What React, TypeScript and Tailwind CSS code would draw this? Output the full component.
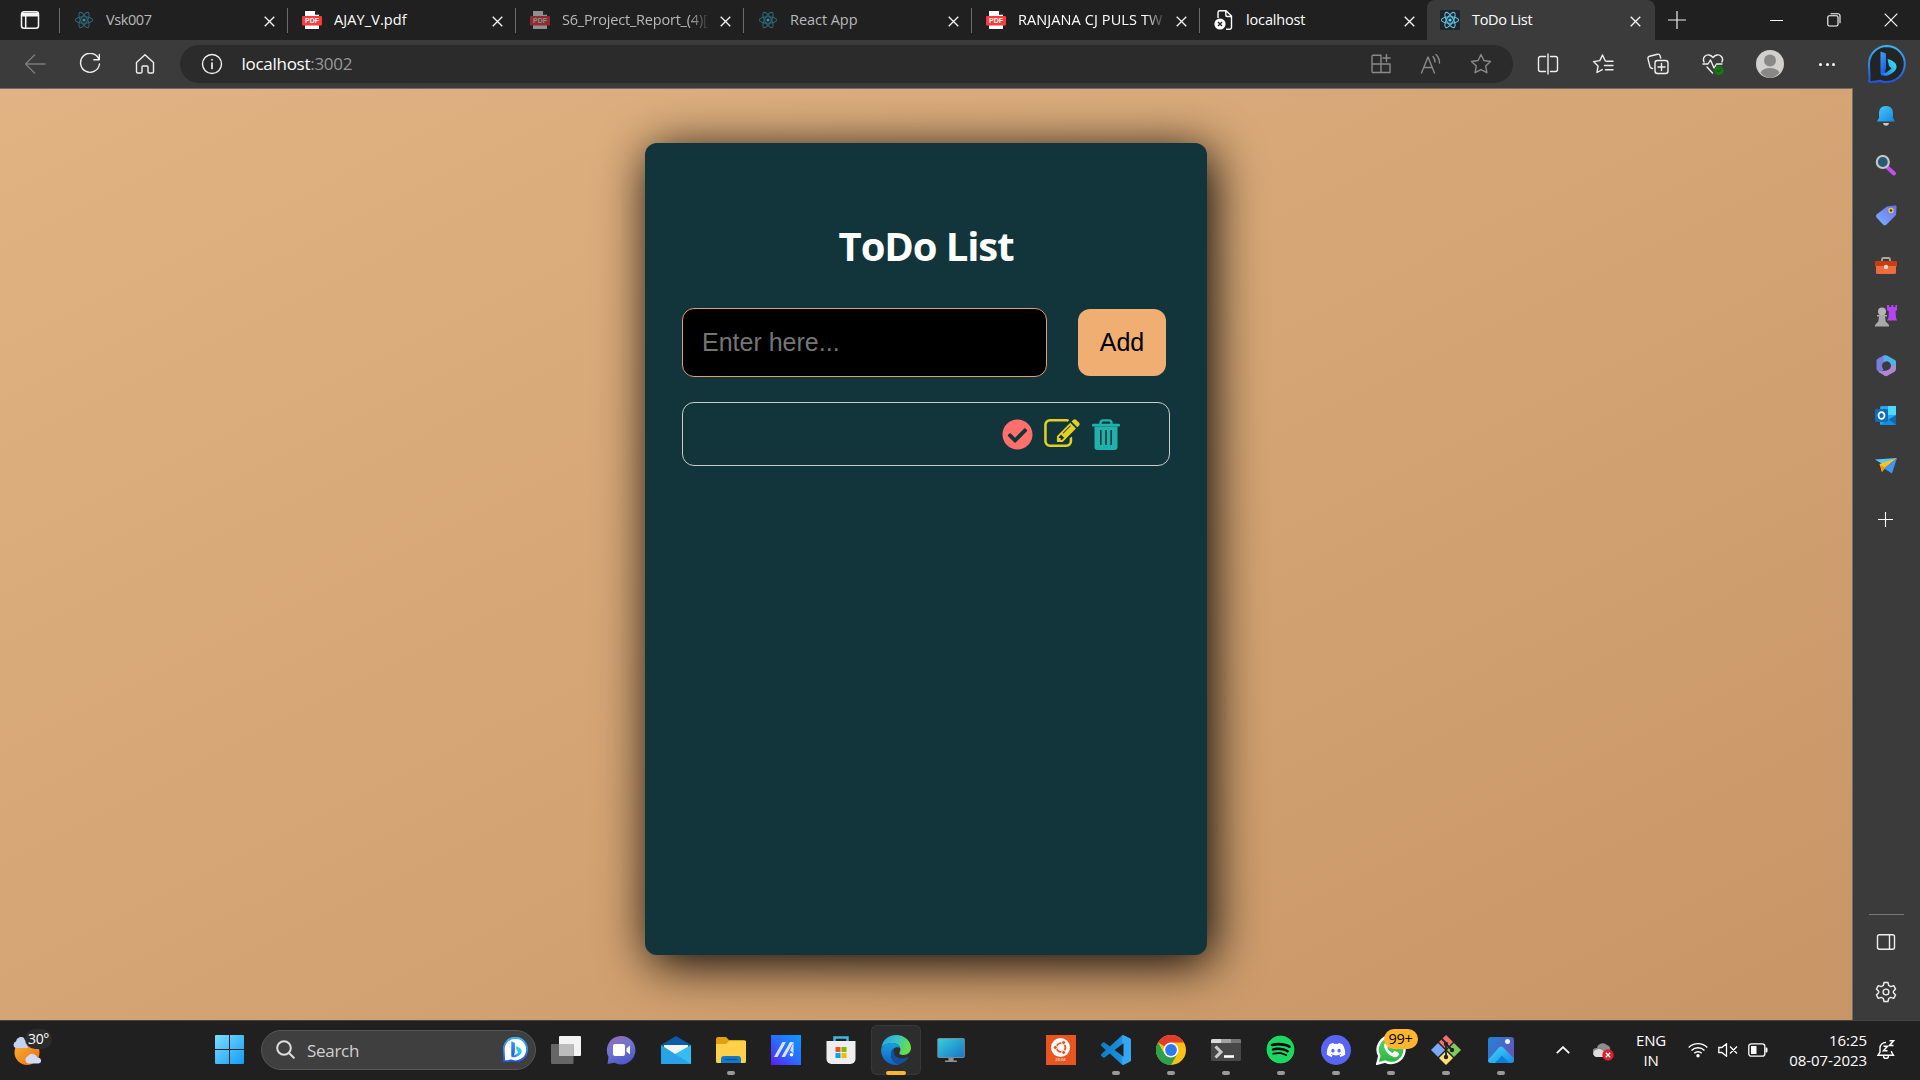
import React from "react";
import { FaCheckCircle, FaDiscord, FaSpotify } from "react-icons/fa";

type IconProps = { className?: string };

const Atom = ({ dim, boxed }: { dim?: boolean; boxed?: boolean }) => (
  <svg viewBox="0 0 20 20" className="size-5 shrink-0" fill="none" stroke={dim ? "#2d6675" : "#5cc3e2"} strokeWidth="1.1">
    {boxed && <rect width="20" height="20" rx="1.5" fill="#20232a" stroke="none" />}
    <ellipse cx="10" cy="10" rx="8.6" ry="3.3" />
    <ellipse cx="10" cy="10" rx="8.6" ry="3.3" transform="rotate(60 10 10)" />
    <ellipse cx="10" cy="10" rx="8.6" ry="3.3" transform="rotate(120 10 10)" />
    <circle cx="10" cy="10" r="1.6" fill={dim ? "#3b8ea3" : "#61dafb"} stroke="none" />
  </svg>
);

const Pdf = ({ dim }: { dim?: boolean }) => (
  <svg viewBox="0 0 20 20" className={dim ? "size-5 shrink-0 opacity-50" : "size-5 shrink-0"}>
    <path d="M2.5 .5h11l4 4v15h-15z" fill="#fff" stroke="#000" strokeWidth=".8" />
    <path d="M13 .5v4.2h4.5z" fill="#222" />
    <rect x="0" y="6" width="20" height="9.5" rx="1" fill="#fb3b3b" />
    <text x="10" y="13.3" fontSize="7" fontWeight="700" textAnchor="middle" fill="#fff" fontFamily="Liberation Sans, sans-serif">PDF</text>
  </svg>
);

const PageError = () => (
  <svg viewBox="0 0 20 20" className="size-5 shrink-0" fill="none" stroke="#fff" strokeWidth="1.4">
    <path d="M4 8V2.5A1.8 1.8 0 0 1 5.8 .8H12L17.5 6V17.5a1.7 1.7 0 0 1-1.7 1.7H12M11.8 1v4a1.5 1.5 0 0 0 1.5 1.5h4" />
    <circle cx="6" cy="14" r="5.6" fill="#fff" stroke="none" />
    <path d="m4 12 4 4M8 12l-4 4" stroke="#222" strokeWidth="1.4" />
  </svg>
);

const Cross = ({ className = "size-[11px]" }: IconProps) => (
  <svg viewBox="0 0 12 12" className={className} fill="none" stroke="#f2f2f2" strokeWidth="1.5">
    <path d="m.8.8 10.4 10.4M11.2.8.8 11.2" />
  </svg>
);

type TabInfo = { title: string; icon: React.ReactNode; dim?: boolean; fade?: boolean; track: string };
const tabs: TabInfo[] = [
  { title: "Vsk007", icon: <Atom dim />, dim: true, track: "tracking-[-0.4px]" },
  { title: "AJAY_V.pdf", icon: <Pdf />, track: "tracking-[0.1px]" },
  { title: "S6_Project_Report_(4)[", icon: <Pdf dim />, dim: true, fade: true, track: "tracking-[-0.2px]" },
  { title: "React App", icon: <Atom dim />, dim: true, track: "tracking-[-0.05px]" },
  { title: "RANJANA CJ PULS TW", icon: <Pdf />, fade: true, track: "tracking-[0.1px]" },
  { title: "localhost", icon: <PageError />, track: "tracking-[-0.15px]" },
];

function TabStrip() {
  return (
    <header className="flex h-10 shrink-0 bg-[#202020]">
      <div className="flex w-[59px] items-center justify-center">
        <svg viewBox="0 0 20 20" className="size-5" fill="none" stroke="#f4f4f4" strokeWidth="1.5">
          <rect x="1.5" y="1.8" width="17" height="16.4" rx="2.5" />
          <path d="M2 3.5h16v2.3H2z" fill="#f4f4f4" />
          <path d="M5.7 6v12" />
        </svg>
      </div>
      {tabs.map((t) => (
        <div key={t.title} className="flex w-[228px] items-center">
          <i className="h-[25px] w-px shrink-0 bg-[#6b6b6b]" />
          <div className="ml-3.5 flex">{t.icon}</div>
          <div
            className={`ml-3 w-[148px] shrink-0 overflow-hidden text-[14.5px] leading-5 whitespace-nowrap ${t.track} ${t.dim ? "text-[#b9b9b9]" : "text-white"} ${t.fade ? "[mask-image:linear-gradient(to_right,#000_86%,transparent)]" : ""}`}
          >
            {t.title}
          </div>
          <div className="ml-[9.5px] flex pt-0.5"><Cross /></div>
        </div>
      ))}
      <div className="flex w-[228px] items-center rounded-t-lg bg-[#3b3b3b] pl-[13px]">
        <Atom boxed />
        <div className="ml-3 w-[146px] text-[14.5px] leading-5 tracking-[-0.3px] text-white">ToDo List</div>
        <div className="ml-3 flex pt-0.5"><Cross /></div>
      </div>
      <div className="flex w-11 items-center justify-center">
        <svg viewBox="0 0 18 18" className="size-[18px]" stroke="#eee" strokeWidth="1.2"><path d="M9 0v18M0 9h18" /></svg>
      </div>
      <div className="ml-auto flex items-center">
        <div className="flex w-[57px] justify-center"><i className="h-px w-[13px] bg-white" /></div>
        <div className="flex w-[57px] justify-center">
          <svg viewBox="0 0 14 14" className="size-3.5" fill="none" stroke="#fff" strokeWidth="1.1">
            <rect x=".8" y="2.8" width="10.2" height="10.2" rx="1.5" />
            <path d="M3.5.8h7.5a2 2 0 0 1 2 2v7.5" />
          </svg>
        </div>
        <div className="flex w-[58px] justify-center">
          <svg viewBox="0 0 14 14" className="size-3.5" stroke="#fff" strokeWidth="1.1"><path d="m.7.7 12.6 12.6M13.3.7.7 13.3" /></svg>
        </div>
      </div>
    </header>
  );
}

const Line = ({ children, color = "#efefef", size = "size-[22px]" }: { children: React.ReactNode; color?: string; size?: string }) => (
  <svg viewBox="0 0 22 22" className={size} fill="none" stroke={color} strokeWidth="1.4" strokeLinecap="round" strokeLinejoin="round">
    {children}
  </svg>
);

const BingBubble = ({ className, light }: { className: string; light?: boolean }) => (
  <svg viewBox="0 0 38 38" className={className}>
    <defs>
      <linearGradient id="bingRing" x1="0" y1="0" x2="0" y2="1"><stop offset="0" stopColor="#3ab4f2" /><stop offset="1" stopColor="#1f55e0" /></linearGradient>
      <linearGradient id="bingB" x1="0" y1="0" x2=".3" y2="1"><stop offset="0" stopColor="#3ea2f7" /><stop offset="1" stopColor="#1c5be8" /></linearGradient>
      <linearGradient id="bingC" x1="0" y1="1" x2="1" y2="0"><stop offset="0" stopColor="#2a6ff0" /><stop offset=".6" stopColor="#27c3f0" /><stop offset="1" stopColor="#4be3d8" /></linearGradient>
    </defs>
    <path d="M19 1a18 18 0 1 1-7 34.7C8 37 4 37 1.2 36.8 2.2 33 1 28 1 19A18 18 0 0 1 19 1z" fill={light ? "#fff" : "#242424"} stroke="url(#bingRing)" strokeWidth={light ? 3 : 2} />
    <path d="M12.500 6.500 18 8.600v14l-1.500 7.500-3 .5c-.7-.8-1-2-1-3.600z" fill="url(#bingB)" />
    <path d="M19.500 14c5.500 1.500 9.500 4 9 8.500-.4 4-6.500 7.500-10.500 8.300-2.500.3-4-.8-4.300-2.800 2 .6 3.600.1 5.300-1l4.500-3.500-2.500-2.500z" fill="url(#bingC)" />
  </svg>
);

function Toolbar() {
  return (
    <nav className="flex h-12 shrink-0 items-center bg-[#3b3b3b] pl-[7px]">
      <div className="flex w-[55px] justify-center"><Line color="#7c7c7c"><path d="M21 11H1.500M10.500 2 1.500 11l9 9" /></Line></div>
      <div className="flex w-[55px] justify-center"><Line><path d="M20 6.500A9.500 9.500 0 1 0 20.500 11M20.300 1.500v5.200h-5.500" /></Line></div>
      <div className="flex w-[55px] justify-center"><Line><path d="M2.500 9.500 11 1.700l8.500 7.800v9.200a1.300 1.300 0 0 1-1.300 1.300h-3a1.200 1.200 0 0 1-1.200-1.200V14a1 1 0 0 0-1-1H9a1 1 0 0 0-1 1v4.800A1.200 1.200 0 0 1 6.800 20h-3a1.300 1.300 0 0 1-1.300-1.300z" /></Line></div>
      <div className="ml-2 flex h-[38px] w-[1333px] items-center rounded-full bg-[#2b2b2b] pr-[7px] pl-[21px]">
        <Line><circle cx="11" cy="11" r="9.500" /><path d="M11 10v5.500M11 6.600v.2" strokeWidth="1.700" /></Line>
        <div className="mb-px ml-[18.5px] text-[17px] leading-6 tracking-[-0.28px] text-white">localhost<span className="text-[#979797]">:3002</span></div>
        <div className="ml-auto flex w-[50px] justify-center"><Line color="#8a8a8a"><path d="M2 11h18v8.500H3.200A1.200 1.200 0 0 1 2 18.300V3.500A1.200 1.200 0 0 1 3.200 2.300H11v17M16.500 1.500v7M13 5h7" /></Line></div>
        <div className="flex w-[50px] justify-center"><Line color="#8a8a8a"><path d="m1.500 20 6.500-16 6.500 16M3.800 14.500h8.400M13 3.500c1.300 1.500 2 3.500 2 5.500M16 1.500c2.300 2.300 3.500 5 3.500 8.500" /></Line></div>
        <div className="flex w-[50px] justify-center"><Line color="#8a8a8a"><path d="m11 1.500 2.900 6 6.600 1-4.800 4.600 1.200 6.600L11 16.600l-5.900 3.100 1.200-6.600L1.500 8.500l6.600-1z" /></Line></div>
      </div>
      <div className="ml-[7px] flex items-center">
        <div className="flex w-[55px] justify-center"><Line><path d="M8.500 3.500h-5a2 2 0 0 0-2 2v11a2 2 0 0 0 2 2h5M13.500 3.500h5a2 2 0 0 1 2 2v11a2 2 0 0 1-2 2h-5M11 1v20" /></Line></div>
        <div className="flex w-[55px] justify-center"><Line><path d="M13.300 8 10.500 2 7.800 7.600l-6.300 1 4.500 4.500-1 6.400 5.300-2.800M14.500 8.300H21M12.500 12.500H21M13.500 16.700H21" /></Line></div>
        <div className="flex w-[55px] justify-center"><Line><rect x="8" y="7.500" width="13" height="13" rx="2.500" /><path d="M14.500 10.500v7M11 14h7M5.500 15.500l-1-.3a2 2 0 0 1-1.600-1.800L1 5.800a2 2 0 0 1 1.500-2.500l8-2A2 2 0 0 1 13 2.500l.7 2.500" /></Line></div>
        <div className="flex w-[55px] justify-center">
          <Line><path d="M2 9C0 4 4 1.500 7 2c2 .3 3 1.300 4 2.500C12 3.300 13 2.300 15 2c3-.5 7 2 5 7M1 11h5l2.500-4 3.500 8 2.500-4h5.500M5 14l5.500 6" /><circle cx="17" cy="17.500" r="4.600" fill="#107c10" stroke="none" /><path d="m15 17.500 1.500 1.500 2.700-2.800" stroke="#0b4a0b" strokeWidth="1" /></Line>
        </div>
        <div className="flex w-[59px] justify-center">
          <svg viewBox="0 0 28 28" className="size-7"><circle cx="14" cy="14" r="14" fill="#d2d0ce" /><circle cx="14" cy="10.500" r="6" fill="#8a8886" /><path d="M4.500 22.500C6 19.500 9.500 18 14 18s8 1.500 9.500 4.500A14 14 0 0 1 14 28a14 14 0 0 1-9.500-5.500z" fill="#8a8886" /></svg>
        </div>
        <div className="flex w-[56px] justify-center gap-[3.5px]"><i className="size-[3px] rounded-full bg-white" /><i className="size-[3px] rounded-full bg-white" /><i className="size-[3px] rounded-full bg-white" /></div>
      </div>
      <div className="flex flex-1 justify-center pr-0.5"><BingBubble className="size-[38px]" /></div>
    </nav>
  );
}

const EditIcon = ({ className }: IconProps) => (
  <svg viewBox="0 128 1792 1408" className={className} fill="currentColor">
    <path d="M888 1184l116-116-152-152-116 116v56h96v96h56zm440-720q-16-16-33 1l-350 350q-17 17-1 33t33-1l350-350q17-17 1-33zm80 594v190q0 119-84.500 203.500t-203.500 84.500h-832q-119 0-203.500-84.500t-84.500-203.500v-832q0-119 84.500-203.500t203.500-84.500h832q63 0 117 25 15 7 18 23 3 17-9 29l-49 49q-14 14-32 8-23-6-45-6h-832q-66 0-113 47t-47 113v832q0 66 47 113t113 47h832q66 0 113-47t47-113v-126q0-13 9-22l64-64q15-15 35-7t20 29zm-96-738l288 288-672 672h-288v-288zm444 132l-92 92-288-288 92-92q28-28 68-28t68 28l152 152q28 28 28 68t-28 68z" />
  </svg>
);

const TrashIcon = ({ className }: IconProps) => (
  <svg viewBox="0 0 28 31" className={className} fill="none">
    <path d="M8.500 6V4A2.500 2.500 0 0 1 11 1.400h6A2.500 2.500 0 0 1 19.500 4v2" stroke="currentColor" strokeWidth="2.400" />
    <rect y="4.800" width="28" height="2.800" rx="1.200" fill="currentColor" />
    <path fillRule="evenodd" fill="currentColor" d="M2.500 7.500h23V28a3 3 0 0 1-3 3h-17a3 3 0 0 1-3-3zM8 11v15h1.600V11zm5.200 0v15h1.600V11zm5.200 0v15H20V11z" />
  </svg>
);

function TodoPage() {
  return (
    <main className="flex flex-1 items-start justify-center border-t border-r border-[#6e6e6e] bg-[linear-gradient(to_bottom_right,#e1b382,#c89666)] pt-[54px]">
      <section className="h-[812px] w-[562px] rounded-xl bg-[#12343b] px-[37px] pt-[76px] shadow-[5px_8px_50px_#000]">
        <h1 className="text-center text-[40px] leading-[53px] font-bold tracking-[-1.1px] text-white">ToDo List</h1>
        <form className="mt-9 flex items-center">
          <input
            placeholder="Enter here..."
            className="h-[69px] w-[365px] rounded-xl border border-[#e1a16a] bg-black px-[19px] font-['Liberation_Sans',sans-serif] text-[25px] text-white placeholder:text-[#757575]"
          />
          <button type="button" className="ml-[31px] h-[67px] w-[88px] rounded-xl bg-[#f0ae73] font-['Liberation_Sans',sans-serif] text-[25px] text-black">Add</button>
        </form>
        <div className="mt-[25px] flex h-16 items-start rounded-xl border border-[#ccc] pt-4 pl-[318.5px]">
          <FaCheckCircle className="size-[31px] text-[#ff6f6c]" />
          <EditIcon className="ml-[11px] h-7 w-9 text-[#e3d026]" />
          <TrashIcon className="ml-3 h-[31px] w-7 text-[#20b2aa]" />
        </div>
      </section>
    </main>
  );
}

const sideIcons: React.ReactNode[] = [
  <><path d="M11 1C6 1 4 4.500 4 8.500V13l-2 3.500h18L18 13V8.500C18 4.500 16 1 11 1z" fill="url(#bell)" /><path d="M8 18h6c-.3 1.800-1.400 2.800-3 2.800S8.300 19.800 8 18z" fill="#c9c9c9" /></>,
  <><path d="m13 13 6 5.500" stroke="#c64bf0" strokeWidth="4" strokeLinecap="round" /><circle cx="7.800" cy="7" r="6" fill="#245a75" stroke="#c6c6c6" strokeWidth="2.200" /></>,
  <><path d="M12 1.500 19.500 .5A1.500 1.500 0 0 1 21.500 2.500L21 10 11.500 19.500a2.500 2.500 0 0 1-3.500 0L1.500 12.500a2.500 2.500 0 0 1 0-3z" fill="url(#tag)" /><circle cx="16" cy="5.500" r="2" fill="#333" stroke="#f7cf2e" strokeWidth="1.300" /></>,
  <><path d="M7 6V4.500A1.500 1.500 0 0 1 8.500 3h5A1.500 1.500 0 0 1 15 4.500V6" fill="none" stroke="#aaa" strokeWidth="1.800" /><rect x="0" y="6" width="22" height="6" rx="1" fill="#c63d12" /><path d="M1 11h20v6.500a1.500 1.500 0 0 1-1.500 1.500h-17A1.500 1.500 0 0 1 1 17.500z" fill="#ef6a3c" /><circle cx="11" cy="12" r="2.200" fill="#d8d8d8" /></>,
  <><path d="M12 0h2.300v2h2V0h2v2h2V0H22v5l-1.500 1.500.5 6 1 3H12l1.500-3 .3-6L12 5z" fill="#b545ef" /><circle cx="7" cy="6.500" r="4" fill="#b4b4b4" /><path d="M2 10h10v1.500H10l.7 5 3.300 3.500v1.500H0v-1.500L3.300 16.500 4 11.500H2z" fill="#a9a9a9" /></>,
  <><path d="M9 .3 3 3.500a3 3 0 0 0-1.500 2.600v8.500L5 18l3.500-3.500a6 6 0 0 1-1-6L11.500 5z" fill="#7a7de0" /><path d="m8.500 .5 3-.2 8 4.500A2.500 2.500 0 0 1 21 7v5l-5-1.500a5 5 0 0 0-4-4.300L8.500 7z" fill="#4fb2e6" /><path d="m3 16.500 6.500 4.200a3 3 0 0 0 3 0l7-4a3 3 0 0 0 1.500-2.600V11l-5-1c.3 3-2 5-4.500 5.500z" fill="#ae86d6" /></>,
  <><rect x="5" y="1" width="16" height="19" rx="1.500" fill="#28a8ea" /><path d="M13 1h8v9h-8z" fill="#50d9ff" /><path d="m21 10-8 5 8 5z" fill="#1565b0" /><path d="M5 20h16l-8-6z" fill="#1490df" /><rect x="0" y="4" width="13" height="13" rx="1.300" fill="#0f6cbd" /><ellipse cx="6.500" cy="10.500" rx="3" ry="3.400" fill="none" stroke="#fff" strokeWidth="1.800" /></>,
  <><path d="M0 4.500 22 3 9 10z" fill="#58c6ff" /><path d="m4.500 9 17.500-6L10 13l-3 4z" fill="#ffc21a" /><path d="M22 3 17 18.500 9 13.500z" fill="#3c97f5" /><path d="M5.500 10 7 17l3-4z" fill="#e89a0c" /></>,
];

function Sidebar() {
  return (
    <aside className="flex w-[67px] flex-col items-center bg-[#3b3b3b] pt-[3px] pr-0.5 pb-[3px]">
      {sideIcons.map((art, i) => (
        <div key={i} className="flex h-[50px] items-center">
          <svg viewBox="0 0 22 22" className="size-[22px]" fill="none">
            <defs>
              <linearGradient id="bell" x1="0" y1="0" x2="1" y2="1"><stop offset="0" stopColor="#45cdf7" /><stop offset="1" stopColor="#1584e0" /></linearGradient>
              <linearGradient id="tag" x1="1" y1="0" x2="0" y2="1"><stop offset="0" stopColor="#6b6cf0" /><stop offset="1" stopColor="#7db2ff" /></linearGradient>
            </defs>
            {art}
          </svg>
        </div>
      ))}
      <div className="flex h-14 items-center"><svg viewBox="0 0 15 15" className="size-[15px]" stroke="#fff" strokeWidth="1.1"><path d="M7.500 0v15M0 7.500h15" /></svg></div>
      <i className="mt-auto mb-0.5 ml-0.5 h-px w-[35px] bg-[#777]" />
      <div className="flex h-[50px] items-center"><Line><rect x="2.500" y="3.800" width="17" height="14.400" rx="2" /><path d="M14.500 4v14" /></Line></div>
      <div className="flex h-[50px] items-center">
        <Line>
          <path d="M9 1.500h4l.7 3 2 1.100 3-.9 1.900 3.400-2.200 2.100v1.600l2.200 2.100-1.900 3.400-3-.9-2 1.100-.7 3H9l-.7-3-2-1.100-3 .9-1.900-3.400 2.200-2.100v-1.600L1.400 8.100l1.900-3.400 3 .9 2-1.100z" />
          <circle cx="11" cy="11" r="2.900" />
        </Line>
      </div>
    </aside>
  );
}

const Art = ({ children }: { children: React.ReactNode }) => (
  <svg viewBox="0 0 30 30" className="size-[30px]" fill="none">{children}</svg>
);

type AppEntry = { name: string; art: React.ReactNode; state?: "open" | "active"; badge?: string };

const leftApps: AppEntry[] = [
  { name: "taskview", art: <Art><rect x="8" y="1" width="22" height="20" rx="1" fill="#f3f3f3" /><rect x="0" y="9" width="22.500" height="20" rx="1" fill="#666" /><path d="M8 9h14.500v12H8z" fill="#bcbcbc" /></Art> },
  { name: "chat", art: <Art><defs><linearGradient id="chat" x1=".1" y1="0" x2=".5" y2="1"><stop offset="0" stopColor="#9a6bb0" /><stop offset=".5" stopColor="#6e74cf" /><stop offset="1" stopColor="#5059c9" /></linearGradient></defs><path d="M15 1a14.200 14.200 0 1 1-6.500 26.700L1.500 29l1-7A14.200 14.200 0 0 1 15 1z" fill="url(#chat)" /><rect x="7" y="9" width="12" height="12" rx="2" fill="#fff" /><path d="m20.500 13.500 3.500-3v9l-3.500-3z" fill="#fff" /></Art> },
  { name: "mail", art: <Art><path d="M0 10 15 1l15 9v4H0z" fill="#0a5ba8" /><path d="M3 10h24v8l-12 6-12-6z" fill="#f4f4f4" /><path d="M30 10v19H0l15-10.500z" fill="#35bdf3" /><path d="M0 10v19h30z" fill="#28a3e8" /></Art> },
  { name: "files", state: "open", art: <Art><path d="M0 4a2 2 0 0 1 2-2h8l3 3h15a2 2 0 0 1 2 2v6H0z" fill="#e0a010" /><path d="M0 9h10l3-3h17v20.500A1.500 1.500 0 0 1 28.500 28H1.500A1.500 1.500 0 0 1 0 26.500z" fill="#ffd04a" /><path d="M5 28v-4a3 3 0 0 1 3-3h14a3 3 0 0 1 3 3v4z" fill="#1379c8" /><path d="M9 24.500h12" stroke="#0b4f8c" strokeWidth="1.300" /></Art> },
  { name: "myasus", art: <Art><defs><linearGradient id="asus" x1="0" y1="1" x2="1" y2="0"><stop offset="0" stopColor="#5a1cf5" /><stop offset=".5" stopColor="#2b6cff" /><stop offset="1" stopColor="#0b9aff" /></linearGradient></defs><rect width="30" height="30" fill="url(#asus)" /><path d="M3 22h3.500L15 7h-3.500zM10.500 22H14l8.500-15H19zM22.500 7v11.500l-3-3-3 6.500" fill="#d8e4ff" /><circle cx="20.500" cy="19.800" r="1.800" fill="#fff" /></Art> },
  { name: "store", art: <Art><path d="M8.500 7V2.500h13V7" stroke="#38b8e8" strokeWidth="2.500" /><path d="M.5 6h29v18a5 5 0 0 1-5 5h-19a5 5 0 0 1-5-5z" fill="#eee" /><path fill="#f25022" d="M9.500 12h5v5h-5z" /><path fill="#7fba00" d="M15.500 12h5v5h-5z" /><path fill="#00a4ef" d="M9.500 18h5v5h-5z" /><path fill="#ffb900" d="M15.500 18h5v5h-5z" /></Art> },
  {
    name: "edge", state: "active", art: (
      <Art>
        <defs>
          <linearGradient id="edgeTop" x1="0" y1="0" x2="1" y2=".3"><stop offset="0" stopColor="#1ba5e0" /><stop offset=".5" stopColor="#35c1cf" /><stop offset="1" stopColor="#66e04a" /></linearGradient>
          <linearGradient id="edgeSide" x1="0" y1="0" x2="0" y2="1"><stop offset="0" stopColor="#1c9de0" /><stop offset="1" stopColor="#0f62c0" /></linearGradient>
        </defs>
        <path d="M.3 13C1.300 5 7.500 0 15 0c9 0 15 6.500 15 13 0 4-3.500 7-7.500 7-3.500 0-4.500-1.200-4-2.500 2.200-3 .5-9-6-9.500C7 8 2.500 9.500.3 13z" fill="url(#edgeTop)" />
        <path d="M.2 13.500C2.500 9.500 7.500 7.800 12.500 8c3.500.2 6 2.500 6.500 5-3-2-9 0-9 7 0 5 4.500 9.500 9 9-1.300.7-2.500 1-4 1C6 30-.8 22.500.2 13.500z" fill="url(#edgeSide)" />
        <path d="M13.500 13c-2.500 1.200-3.600 4-3.500 7 .2 5 4.500 9.200 9 9 3.500-1 6.500-3 8.500-6.200.2-.6-.2-1-.8-.6C19.500 25.500 10.500 22.500 13.500 13z" fill="#11519c" />
      </Art>
    ),
  },
  { name: "pc", art: <Art><defs><linearGradient id="pc" x1="0" y1="0" x2="1" y2="1"><stop offset="0" stopColor="#35d0dc" /><stop offset="1" stopColor="#1874c8" /></linearGradient></defs><rect x="1.800" y="3.500" width="26.500" height="19" rx=".8" fill="url(#pc)" stroke="#7d8b92" strokeWidth="1" /><path d="M12.500 23h5v2.500H21V27H9v-1.500h3.500z" fill="#8b9499" /></Art> },
];

const rightApps: AppEntry[] = [
  {
    name: "ubuntu", art: (
      <div className="flex size-[30px] flex-col items-center bg-[#e95420] pt-[3px]">
        <svg viewBox="0 0 20 20" className="size-[19px] shrink-0" fill="none">
          <circle cx="10" cy="10" r="10" fill="#fff" />
          <circle cx="10.500" cy="10" r="4.600" stroke="#e95420" strokeWidth="2" />
          <g fill="#e95420" stroke="#fff" strokeWidth="1"><circle cx="4.500" cy="10" r="2.100" /><circle cx="13.300" cy="4.800" r="2.100" /><circle cx="13.300" cy="15.200" r="2.100" /></g>
        </svg>
        <span className="text-[4px] leading-[6px] font-bold text-[#ffc9b3]">20.04</span>
      </div>
    ),
  },
  { name: "code", state: "open", art: <svg viewBox="0 0 24 24" className="size-[30px]"><defs><linearGradient id="vs" x1="0" y1="0" x2="1" y2="0"><stop offset="0" stopColor="#0f7cc9" /><stop offset=".7" stopColor="#1c91dd" /><stop offset=".72" stopColor="#32a8f2" /></linearGradient></defs><path fill="url(#vs)" d="M23.150 2.587L18.210.21a1.494 1.494 0 0 0-1.705.29l-9.460 8.630-4.120-3.128a.999.999 0 0 0-1.276.057L.327 7.261A1 1 0 0 0 .326 8.740L3.899 12 .326 15.260a1 1 0 0 0 .001 1.479L1.650 17.940a.999.999 0 0 0 1.276.057l4.120-3.128 9.460 8.630a1.492 1.492 0 0 0 1.704.29l4.942-2.377A1.500 1.500 0 0 0 24 20.060V3.939a1.500 1.500 0 0 0-.85-1.352zm-5.146 14.861L10.826 12l7.178-5.448v10.896z" /></svg> },
  { name: "chrome", state: "open", art: <Art><circle cx="15" cy="15" r="15" fill="#fbc116" /><path d="M15 15 2 7.500A15 15 0 0 1 28 7.500H15z" fill="#e33b2e" /><path d="M2 7.500a15 15 0 0 0 13 22.500l6.500-11.300L15 15 8.500 18.700z" fill="#2ba14b" /><circle cx="15" cy="15" r="7.500" fill="#fff" /><circle cx="15" cy="15" r="5.900" fill="#2f78ee" /></Art> },
  { name: "terminal", state: "open", art: <Art><rect y="4" width="30" height="22" rx="1.500" fill="#484848" /><path d="M0 8V5.500A1.500 1.500 0 0 1 1.500 4H10v4z" fill="#dadada" /><path d="M10 4h10v4H10z" fill="#a3a3a3" /><path d="M20 4h8.500A1.500 1.500 0 0 1 30 5.500V8H20z" fill="#777" /><path d="m4.500 11.500 5.500 5.500-5.500 5.500" stroke="#ccc" strokeWidth="3" /><path d="M13 21.500h10" stroke="#fff" strokeWidth="2.600" /></Art> },
  { name: "spotify", state: "open", art: <div className="rounded-full bg-[#000]"><FaSpotify className="size-[29px] text-[#1ed760]" /></div> },
  { name: "discord", state: "open", art: <div className="flex size-[30px] items-center justify-center rounded-full bg-[#5865f2]"><FaDiscord className="size-5 text-white" /></div> },
  { name: "whatsapp", state: "open", badge: "99+", art: <div className="relative size-[30px]"><svg viewBox="0 0 30 30" className="size-[30px]"><defs><linearGradient id="wa" x1="0" y1="0" x2="0" y2="1"><stop offset="0" stopColor="#5fd668" /><stop offset="1" stopColor="#27b43e" /></linearGradient></defs><path d="M15.500 1.200a13.400 13.400 0 1 1-6.300 25.400L1.300 28.700l2-7.700A13.400 13.400 0 0 1 15.500 1.200z" fill="url(#wa)" stroke="#fff" strokeWidth="2.400" /></svg><svg viewBox="0 0 24 24" className="absolute top-[6px] left-[7px] size-[17px]" fill="#fff"><path d="M5 1.500C2 3 .8 6 2 9.500c2.500 6.500 7 10.800 13 13 3.500 1 6.500-.5 7.500-3.500.4-1.500 0-2-1.200-2.600l-4-2c-1-.4-1.500-.3-2.200.6l-1.500 2c-3.500-1.500-6-4-7.600-7.300l1.600-2c.6-.9.4-1.500 0-2.400L6 2.300C5.800 1.700 5.600 1.400 5 1.500z" /></svg></div> },
  { name: "git", state: "open", art: <Art><path d="m15 0 7 7-7 7-7-7z" fill="#f56f6f" /><path d="m23 8 7 7-7 7-7-7z" fill="#80cc59" /><path d="m7 8 7 7-7 7-7-7z" fill="#7aa9f7" /><path d="m15 16 7 7-7 7-7-7z" fill="#ffdf78" /><path d="M10.500 3.500 15 8v14M15 9l6 6" stroke="#222" strokeWidth="1.800" /><circle cx="15" cy="9" r="2.200" fill="#222" /><circle cx="15" cy="22" r="2.200" fill="#222" /><circle cx="21" cy="15" r="2.200" fill="#222" /></Art> },
  { name: "photos", state: "open", art: <Art><defs><linearGradient id="ph" x1="0" y1="0" x2="1" y2=".6"><stop offset="0" stopColor="#1b86d8" /><stop offset="1" stopColor="#6b52b8" /></linearGradient><linearGradient id="ph2" x1="0" y1="0" x2="1" y2="1"><stop offset="0" stopColor="#46d4ff" /><stop offset="1" stopColor="#128fe6" /></linearGradient></defs><rect x="2" y="2" width="26" height="26" rx="3" fill="url(#ph)" /><path d="M2 25 13 12.500a3 3 0 0 1 4.300 0L28 23.500V25a3 3 0 0 1-3 3H5a3 3 0 0 1-3-3z" fill="url(#ph2)" /><path d="m9 28 7-7.500L23.500 28z" fill="#0e7ed6" /><circle cx="21.500" cy="6.500" r="2.500" fill="#e9f4ff" /></Art> },
];

const TaskApp = ({ app }: { app: AppEntry }) => (
  <div className="flex w-[55px] justify-center">
    <div className={app.state === "active" ? "relative flex h-[50px] w-[50px] items-center justify-center rounded-md bg-[#2d2d2d] ring-1 ring-[#383838] ring-inset" : "relative flex h-[50px] w-[50px] items-center justify-center"}>
      {app.art}
      {app.state === "open" && <i className="absolute bottom-0 left-[21px] h-1 w-2 rounded-full bg-[#9a9a9a]" />}
      {app.state === "active" && <i className="absolute bottom-0 left-[15px] h-1 w-5 rounded-full bg-[#ffb52e]" />}
      {app.badge && <span className="absolute top-1 left-[18px] flex h-5 w-[34px] items-center justify-center rounded-full bg-[#ffb52e] text-[14.5px] tracking-[-0.3px] text-black">{app.badge}</span>}
    </div>
  </div>
);

function Taskbar() {
  return (
    <footer className="flex h-[60px] shrink-0 items-center border-t border-[#444] bg-[#202020] pb-0.5">
      <div className="relative ml-3 h-[38px] w-[38px]">
        <svg viewBox="0 0 30 30" className="absolute top-1.5 left-0 size-[30px]">
          <defs><linearGradient id="sun" x1="0" y1="0" x2="1" y2="1"><stop offset="0" stopColor="#f8b83a" /><stop offset="1" stopColor="#ee6a12" /></linearGradient></defs>
          <circle cx="15" cy="15.500" r="12.500" fill="url(#sun)" />
          <path d="M3.500 11a3.500 3.500 0 0 1 .5-6.500A5 5 0 0 1 12 1l4 10z" fill="#c3d2f2" />
          <path d="M16 26.500a4 4 0 0 1 0-7.500 5.500 5.500 0 0 1 9.500 1.500 3 3 0 0 1 1 6z" fill="#cfdcf8" />
        </svg>
        <span className="absolute -top-0.5 left-[13px] flex h-5 w-[27px] items-center justify-center rounded-full bg-[#2c2c2c] text-[14px] tracking-[-0.3px] text-white">30°</span>
      </div>
      <svg viewBox="0 0 29 29" className="ml-[165px] size-[29px]">
        <defs><linearGradient id="win" x1="0" y1="0" x2="1" y2="1"><stop offset="0" stopColor="#7fdcff" /><stop offset="1" stopColor="#109df5" /></linearGradient></defs>
        <path fill="url(#win)" d="M1 0h13v14H0V1a1 1 0 0 1 1-1zm14 0h13a1 1 0 0 1 1 1v13H15zM0 15h14v14H1a1 1 0 0 1-1-1zm15 0h14v13a1 1 0 0 1-1 1H15z" />
      </svg>
      <div className="ml-[17px] flex h-10 w-[275px] items-center rounded-full border border-[#565656] bg-[#3f3f3f] pr-[7px] pl-3.5">
        <svg viewBox="0 0 19 19" className="size-[19px]" fill="none" stroke="#ddd" strokeWidth="2" strokeLinecap="round"><circle cx="8" cy="8" r="6.800" /><path d="m13 13 4.800 4.800" /></svg>
        <span className="mt-0.5 ml-3 text-[17px] tracking-[-0.3px] text-[#d0d0d0]">Search</span>
        <BingBubble light className="ml-auto size-[25px]" />
      </div>
      <div className="ml-[2px] flex">{leftApps.map((a) => <TaskApp key={a.name} app={a} />)}</div>
      <div className="ml-[55px] flex">{rightApps.map((a) => <TaskApp key={a.name} app={a} />)}</div>
      <svg viewBox="0 0 14 8" className="ml-[28px] w-3.5" fill="none" stroke="#fff" strokeWidth="1.8"><path d="m.8 7.200 6.200-6 6.200 6" /></svg>
      <svg viewBox="0 0 22 18" className="mt-1 ml-[23px] w-[22px]"><path d="M3 13a4 4 0 0 1 1-8 6 6 0 0 1 10-3 4 4 0 0 1 3 5v6z" fill="#8d8d8d" /><path d="M3.500 14a3.600 3.600 0 0 1-.5-7C6 5 9 6.500 11 9v5z" fill="#ddd" /><circle cx="15" cy="12" r="5.700" fill="#d8232e" /><path d="m12.800 9.800 4.400 4.400m0-4.400-4.400 4.400" stroke="#fff" strokeWidth="1.300" /></svg>
      <div className="ml-3.5 w-[44px] text-center text-[15px] leading-5 tracking-[-0.2px] text-white">ENG<br />IN</div>
      <svg viewBox="0 0 20 16" className="ml-[15px] w-5" fill="none" stroke="#fff" strokeWidth="1.4"><path d="M.7 5.500a13.200 13.200 0 0 1 18.600 0M3.500 8.500a9.200 9.200 0 0 1 13 0M6.300 11.300a5.200 5.200 0 0 1 7.400 0" /><circle cx="10" cy="13.700" r="1.700" fill="#fff" stroke="none" /></svg>
      <svg viewBox="0 0 20 14" className="ml-[10px] w-5" fill="none" stroke="#fff" strokeWidth="1.3"><path d="M.8 4.500h3L8.500.8v12.400L3.800 9.500h-3zM12 3.500l7 7M19 3.500l-7 7" /></svg>
      <svg viewBox="0 0 20 14" className="ml-[10px] w-5" fill="none" stroke="#fff" strokeWidth="1.3"><rect x=".8" y=".8" width="16" height="12.400" rx="2.500" /><path d="M3 3h5.500v8H3z" fill="#fff" stroke="none" /><path d="M17.500 4.500h.8a1.200 1.200 0 0 1 1.200 1.200v2.600a1.200 1.200 0 0 1-1.200 1.200h-.8z" fill="#fff" stroke="none" /></svg>
      <div className="ml-auto text-right text-[15px] leading-5 tracking-[-0.05px] text-white">16:25<br />08-07-2023</div>
      <svg viewBox="0 0 18 19" className="mr-[25px] ml-2.5 w-[18px]" fill="none" stroke="#fff" strokeWidth="1.4"><path d="M9 2.500A5.500 5.500 0 0 0 3 8v4l-2 3.300h15.500L14.500 12v-1M6.500 16a2.500 2.500 0 0 0 5 0" /><path d="M6.500 6.200h4l-4 4.600h4M12.500.8h4l-4 4.700h4" strokeWidth="1.500" /></svg>
    </footer>
  );
}

export default function App() {
  return (
    <div className="flex h-[1080px] w-[1920px] flex-col overflow-hidden bg-[#3b3b3b] font-['Open_Sans','Noto_Sans',sans-serif]">
      <TabStrip />
      <Toolbar />
      <div className="flex min-h-0 flex-1">
        <TodoPage />
        <Sidebar />
      </div>
      <Taskbar />
    </div>
  );
}
